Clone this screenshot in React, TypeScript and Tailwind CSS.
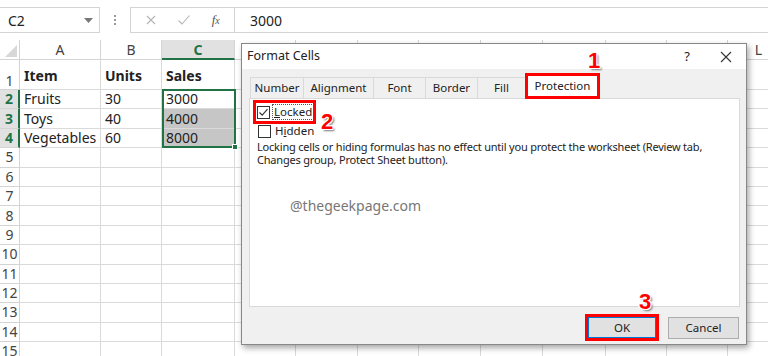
import React from "react";

const COLS = [
  { name: "A", w: "w-[81px]" },
  { name: "B", w: "w-[61px]" },
  { name: "C", w: "w-[73px]" },
  { name: "D", w: "w-[61px]" },
  { name: "E", w: "w-[62px]" },
  { name: "F", w: "w-[61px]" },
  { name: "G", w: "w-[62px]" },
  { name: "H", w: "w-[62px]" },
  { name: "I", w: "w-[63px]" },
  { name: "J", w: "w-[61px]" },
  { name: "K", w: "w-[61px]" },
  { name: "L", w: "w-[62px]" },
];

// headers hidden behind the dialog are left blank
const SHOWN_HEADERS = ["A", "B", "C", "L"];

const DATA = [
  ["Item", "Units", "Sales"],
  ["Fruits", "30", "3000"],
  ["Toys", "40", "4000"],
  ["Vegetables", "60", "8000"],
];

const TABS = [
  { label: "Number", w: "w-[53px]" },
  { label: "Alignment", w: "w-[70px]" },
  { label: "Font", w: "w-[52px]" },
  { label: "Border", w: "w-[52px]" },
  { label: "Fill", w: "w-[48px]" },
];

const Marker = ({ n, className }: { n: string; className: string }) => (
  <span
    className={`absolute text-[22px] font-bold leading-none text-[#ff0000] [font-family:'Liberation_Sans',Arial,sans-serif] [text-shadow:1px_1px_0_#fff,-1px_-1px_0_#fff,1px_-1px_0_#fff,-1px_1px_0_#fff,2px_2px_2px_#777] ${className}`}
  >
    {n}
  </span>
);

const CheckBox = ({ checked }: { checked?: boolean }) => (
  <span className="w-[13px] h-[13px] border border-[#333] bg-white flex items-center justify-center shrink-0">
    {checked && (
      <svg width="11" height="11" viewBox="0 0 11 11">
        <path d="M1.5 5.5 L4.2 8.2 L9.5 2.2" fill="none" stroke="#333" strokeWidth="1.2" />
      </svg>
    )}
  </span>
);

const FormulaBar = () => (
  <div className="h-[40px] pt-[7px] flex items-start text-[#222]">
    <div className="w-[100px] h-[26px] border-y border-r border-[#d4d4d4] flex items-center justify-between pl-[8px] pr-[6px]">
      <span className="text-[14px]">C2</span>
      <svg width="9" height="5" viewBox="0 0 9 5">
        <path d="M0 0 H9 L4.5 5 Z" fill="#777" />
      </svg>
    </div>
    <div className="w-[30px] h-[26px] flex flex-col items-center justify-center gap-[2px]">
      <span className="w-[2px] h-[2px] bg-[#999]" />
      <span className="w-[2px] h-[2px] bg-[#999]" />
      <span className="w-[2px] h-[2px] bg-[#999]" />
    </div>
    <div className="w-[105px] h-[26px] border border-[#d4d4d4] flex items-center justify-around px-[4px] text-[#aaa]">
      <svg width="12" height="12" viewBox="0 0 12 12">
        <path d="M2 2 L10 10 M10 2 L2 10" stroke="#b5b5b5" strokeWidth="1.1" />
      </svg>
      <svg width="14" height="12" viewBox="0 0 14 12">
        <path d="M1.5 6.5 L5 10 L12.5 1.5" fill="none" stroke="#b5b5b5" strokeWidth="1.1" />
      </svg>
      <span className="text-[13px] italic text-[#555] [font-family:'Liberation_Serif',serif]">
        f<span className="text-[10px]">x</span>
      </span>
    </div>
    <div className="flex-1 h-[26px] border-y border-[#d4d4d4] flex items-center pl-[15px] text-[14px]">3000</div>
  </div>
);

const Sheet = () => {
  const rows = Array.from({ length: 15 }, (_, i) => i + 1);
  return (
    <div className="relative">
      <div className="flex h-[20px]">
        <div className="w-[20px] shrink-0 border-r border-b border-[#d4d4d4] flex items-end justify-end p-[2px]">
          <svg width="12" height="12" viewBox="0 0 12 12">
            <path d="M12 0 V12 H0 Z" fill="#d8d8d8" />
          </svg>
        </div>
        {COLS.map((c) => (
          <div
            key={c.name}
            className={`${c.w} shrink-0 border-r flex items-center justify-center text-[14px] ${
              c.name === "C"
                ? "bg-[#e1e1e1] text-[#217346] font-bold border-b-2 border-b-[#217346] border-r-[#d4d4d4]"
                : "border-b border-[#d4d4d4] text-[#444]"
            }`}
          >
            {SHOWN_HEADERS.includes(c.name) ? c.name : ""}
          </div>
        ))}
      </div>
      {rows.map((r) => {
        const sel = r >= 2 && r <= 4;
        const data = DATA[r - 1];
        return (
          <div key={r} className={`flex ${r === 1 ? "h-[30px]" : "h-[19.4px]"}`}>
            <div
              className={`w-[20px] shrink-0 border-b border-[#d4d4d4] flex justify-center text-[14px] leading-none ${
                r === 1 ? "items-end pb-[1px]" : "items-center"
              } ${
                sel
                  ? "bg-[#e1e1e1] text-[#217346] font-bold border-r-2 border-r-[#217346]"
                  : "border-r text-[#444]"
              }`}
            >
              {r}
            </div>
            {COLS.map((c, ci) => {
              const txt = data ? data[ci] : undefined;
              const shaded = c.name === "C" && (r === 3 || r === 4);
              return (
                <div
                  key={c.name}
                  className={`${c.w} shrink-0 border-r border-b border-[#dadada] flex px-[4px] text-[14px] text-[#222] leading-none ${
                    r === 1 ? "items-end pb-[6px] font-bold" : "items-center"
                  } ${shaded ? "bg-[#c6c6c6]" : ""}`}
                >
                  {txt}
                </div>
              );
            })}
          </div>
        );
      })}
      <div className="absolute left-[162px] top-[49px] w-[74px] h-[59px] border-2 border-[#217346]" />
      <div className="absolute left-[232px] top-[104px] w-[6px] h-[6px] bg-[#217346] border border-white" />
    </div>
  );
};

const Dialog = () => (
  <div className="absolute left-[241px] top-[43px] w-[506px] h-[302px] border border-[#888] bg-[#f0f0f0] shadow-[2px_3px_6px_rgba(0,0,0,0.35)] flex flex-col text-[#222]">
    <div className="h-[25px] bg-white flex items-center justify-between pl-[5px] pr-[14px]">
      <span className="text-[12.5px]">Format Cells</span>
      <div className="flex items-center gap-[30px]">
        <span className="text-[13px]">?</span>
        <svg width="12" height="12" viewBox="0 0 12 12">
          <path d="M1 1 L11 11 M11 1 L1 11" stroke="#333" strokeWidth="1.1" />
        </svg>
      </div>
    </div>
    <div className="flex-1 flex flex-col px-[7px] pt-[4px]">
      <div className="flex items-end h-[25px] pl-[1px]">
        {TABS.map((t) => (
          <div
            key={t.label}
            className={`${t.w} h-[21px] border-t border-l border-[#d9d9d9] flex items-center justify-center text-[11.5px]`}
          >
            {t.label}
          </div>
        ))}
        <div className="w-[75px] h-[26px] bg-white border-[3px] border-[#ff0000] flex items-center justify-center text-[11.5px] -mb-[1px] relative z-10">
          Protection
        </div>
      </div>
      <div className="w-[491px] h-[209px] bg-white border border-[#d9d9d9] pl-[3px] pt-[1px] flex flex-col text-[11.5px]">
        <div className="w-[63px] h-[24px] border-[3px] border-[#ff0000] flex items-center pl-[1px] gap-[2px]">
          <CheckBox checked />
          <span className="border border-dotted border-[#555] px-[1px] leading-[14px]">
            <span className="underline">L</span>ocked
          </span>
        </div>
        <div className="flex items-center gap-[4px] pl-[5px] h-[14px]">
          <CheckBox />
          <span className="leading-[14px]">
            H<span className="underline">i</span>dden
          </span>
        </div>
        <p className="pl-[4px] pt-[2px] leading-[13px] text-[11px] tracking-[-0.2px]">
          Locking cells or hiding formulas has no effect until you protect the worksheet (Review tab,
          <br />
          Changes group, Protect Sheet button).
        </p>
        <p className="pl-[37px] pt-[31px] text-[14px] leading-[18px] text-[#777]">@thegeekpage.com</p>
      </div>
      <div className="flex justify-end gap-[9px] pt-[7px] pr-[0px]">
        <div className="w-[74px] h-[27px] border-[3px] border-[#ff0000] flex">
          <div className="flex-1 bg-[#e1e1e1] border border-[#0078d7] flex items-center justify-center text-[11.5px]">
            OK
          </div>
        </div>
        <div className="w-[71px] h-[22px] mt-[3px] bg-[#e1e1e1] border border-[#adadad] flex items-center justify-center text-[11.5px]">
          Cancel
        </div>
      </div>
    </div>
    <Marker n="1" className="left-[346px] top-[6px]" />
    <Marker n="2" className="left-[79px] top-[67px]" />
    <Marker n="3" className="left-[397px] top-[247px]" />
  </div>
);

export default function App() {
  return (
    <div className="w-[768px] h-[356px] overflow-hidden bg-white relative [font-family:'Noto_Sans',Arial,sans-serif]">
      <FormulaBar />
      <Sheet />
      <Dialog />
    </div>
  );
}
